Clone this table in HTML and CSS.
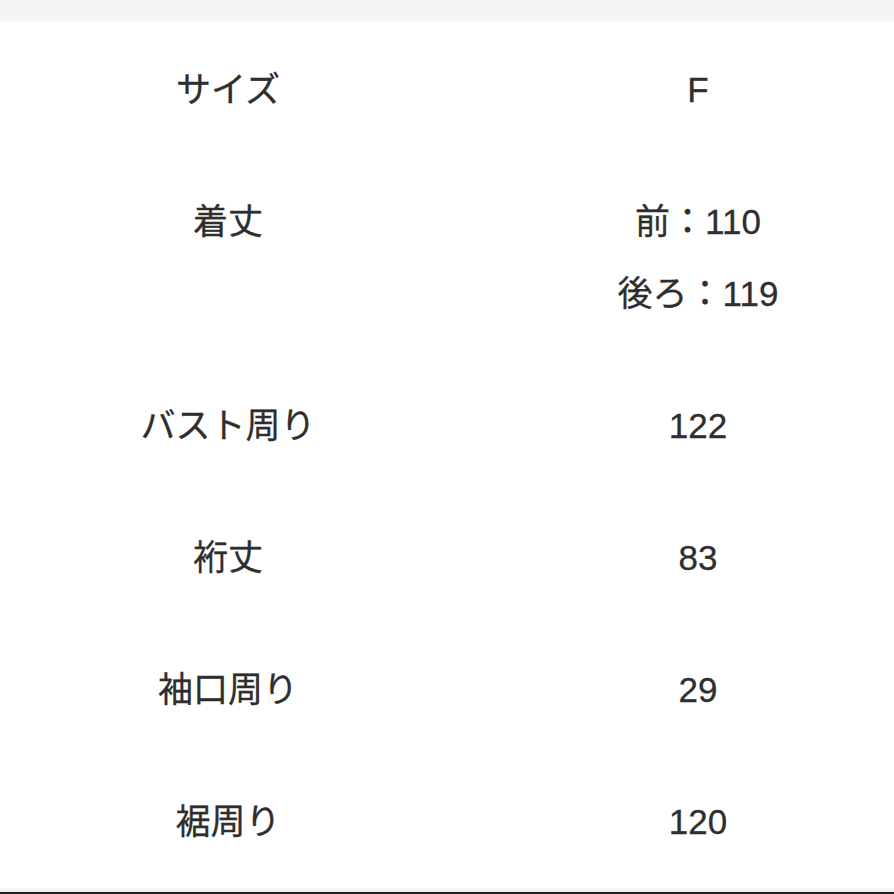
FILE: index.html
```html
<!DOCTYPE html>
<html lang="ja">
<head>
<meta charset="utf-8">
<link rel="stylesheet" href="styles.css">
</head>
<body>
<div class="topbar"></div>
<div class="table">
  <div class="row"><div class="label">サイズ</div><div class="value">F</div></div>
  <div class="row"><div class="label">着丈</div><div class="value"><div>前：110</div><div>後ろ：119</div></div></div>
  <div class="row"><div class="label">バスト周り</div><div class="value">122</div></div>
  <div class="row"><div class="label">裄丈</div><div class="value">83</div></div>
  <div class="row"><div class="label">袖口周り</div><div class="value">29</div></div>
  <div class="row"><div class="label">裾周り</div><div class="value">120</div></div>
</div>
<div class="bottom"></div>
</body>
</html>
```
FILE: styles.css
```css
html, body {
  margin: 0;
  padding: 0;
  background: #ffffff;
}
body {
  width: 894px;
  height: 894px;
  overflow: hidden;
  display: flex;
  flex-direction: column;
  font-family: "Liberation Sans", "Noto Sans CJK JP", sans-serif;
  color: #2e2e2e;
  font-size: 35px;
}
.topbar {
  height: 21px;
  background: #f5f5f5;
  flex: none;
}
.table {
  padding-top: 3px;
  flex: none;
}
.row {
  display: grid;
  grid-template-columns: 456px 392px;
  column-gap: 46px;
  padding: 30px 0;
  line-height: 72px;
  height: auto;
  text-align: center;
}
.label, .value {
  -webkit-text-stroke: 0.3px #2e2e2e;
}
.bottom {
  height: 4px;
  flex: none;
  background: linear-gradient(#fafafa, #ececec);
  border-bottom: 2px solid #222222;
}
```
